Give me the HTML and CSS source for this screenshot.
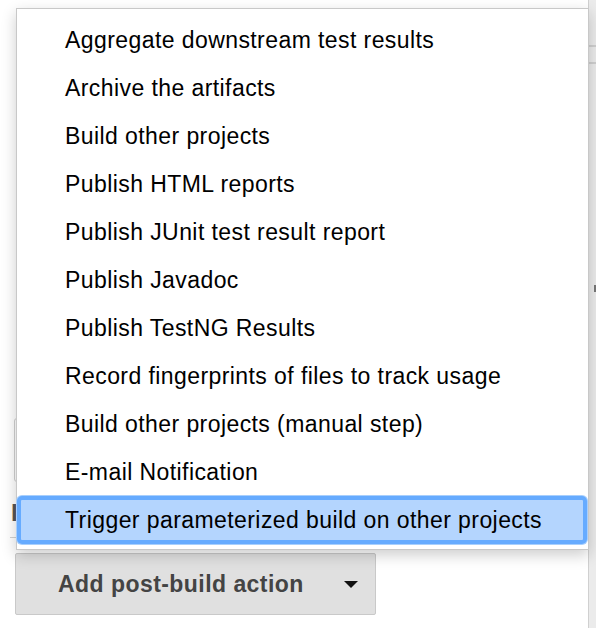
FILE: index.html
```html
<!DOCTYPE html>
<html>
<head>
<meta charset="utf-8">
<link rel="stylesheet" href="styles.css">
</head>
<body>
<div class="page">
  <div class="main">
    <div class="field"></div>
    <div class="label">I</div>
    <div class="rule"></div>
    <div class="actions">
      <button class="add-btn">Add post-build action<span class="caret"></span></button>
    </div>
  </div>
  <aside class="side">
    <div class="side-row side-row-top"></div>
    <div class="side-row side-row-mid"></div>
    <div class="side-row side-row-rest"><span class="side-mark"></span></div>
  </aside>
</div>
<ul class="menu">
  <li class="menu-item">Aggregate downstream test results</li>
  <li class="menu-item">Archive the artifacts</li>
  <li class="menu-item">Build other projects</li>
  <li class="menu-item">Publish HTML reports</li>
  <li class="menu-item">Publish JUnit test result report</li>
  <li class="menu-item">Publish Javadoc</li>
  <li class="menu-item">Publish TestNG Results</li>
  <li class="menu-item">Record fingerprints of files to track usage</li>
  <li class="menu-item">Build other projects (manual step)</li>
  <li class="menu-item">E-mail Notification</li>
  <li class="menu-item is-active">Trigger parameterized build on other projects</li>
</ul>
</body>
</html>
```

FILE: styles.css
```css
* { box-sizing: border-box; }
html, body {
  margin: 0;
  padding: 0;
  background: #ffffff;
  font-family: "Liberation Sans", Arial, Helvetica, sans-serif;
}
.page {
  width: 596px;
  height: 628px;
  display: grid;
  grid-template-columns: 588px 8px;
  overflow: hidden;
}
.main {
  padding: 418px 0 0 10px;
  display: flex;
  flex-direction: column;
}
.field {
  margin-left: 4px;
  width: 200px;
  height: 64px;
  border: 1px solid #cfcfcf;
  border-radius: 3px;
}
.label {
  margin-top: 18px;
  margin-left: 1px;
  height: 26px;
  line-height: 26px;
  font-size: 24px;
  font-weight: bold;
  color: #555;
}
.rule {
  margin-top: 11px;
  height: 1px;
  background: #d2d2d2;
}
.actions {
  margin-top: 15px;
  padding-left: 5px;
}
.add-btn {
  display: flex;
  align-items: center;
  width: 361px;
  height: 62px;
  padding: 0 0 0 42px;
  background: #e0e0e0;
  border: 1px solid #c9c9c9;
  border-radius: 2px;
  font-family: "Liberation Sans", Arial, Helvetica, sans-serif;
  font-weight: bold;
  font-size: 23px;
  letter-spacing: 0.45px;
  color: #444444;
}
.caret {
  margin-left: 40px;
  width: 0;
  height: 0;
  border-left: 7px solid transparent;
  border-right: 7px solid transparent;
  border-top: 7px solid #111;
}
.side {
  background: #ebebeb;
  border-left: 1px solid #d0d0d0;
  display: flex;
  flex-direction: column;
}
.side-row-top {
  height: 47px;
  border-bottom: 2px solid #cfcfcf;
}
.side-row-mid {
  height: 17px;
  border-bottom: 2px solid #cfcfcf;
}
.side-row-rest {
  flex: 1;
  padding: 221px 0 0 5px;
}
.side-mark {
  display: block;
  width: 2px;
  height: 7px;
  background: #777;
}
.menu {
  position: absolute;
  left: 16px;
  top: 8px;
  width: 573px;
  margin: 0;
  padding: 7px 0 5px;
  list-style: none;
  background: #ffffff;
  border: 1px solid #c8c8c8;
  box-shadow: 0 5px 14px rgba(0, 0, 0, 0.2);
}
.menu-item {
  height: 48px;
  line-height: 48px;
  padding-left: 48px;
  font-size: 23px;
  letter-spacing: 0.42px;
  color: #000;
  white-space: nowrap;
}
.menu-item.is-active {
  margin-right: 1px;
  background: #b4d5fe;
  border-radius: 5px;
  box-shadow: inset 0 0 0 4px #66abff, 0 0 0 1px #a8cffd;
}
```
